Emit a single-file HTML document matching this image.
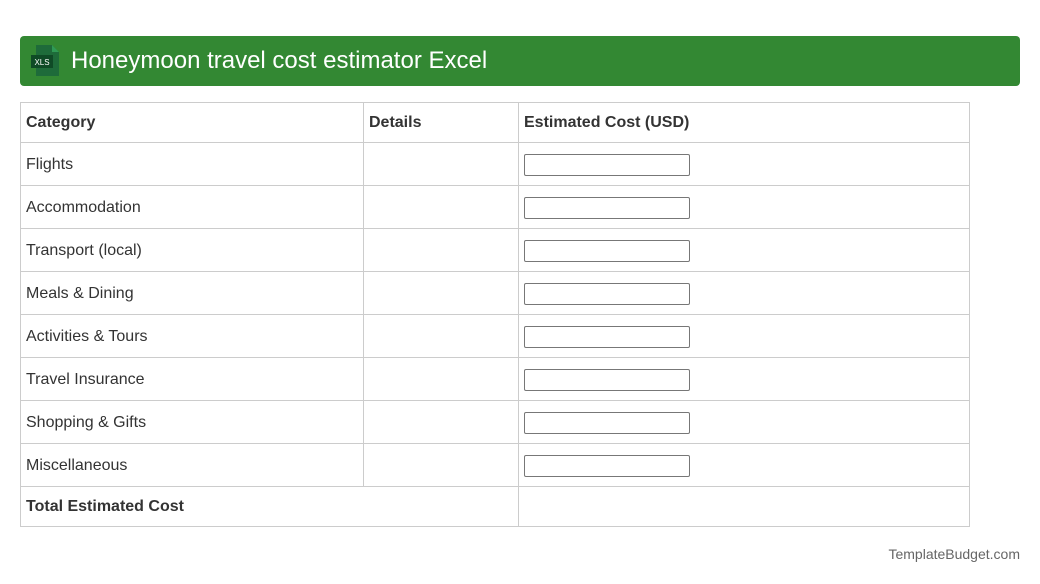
<!DOCTYPE html>
<html><head><style>
body{margin:0;background:#fff;font-family:"Liberation Sans",Arial,sans-serif;color:#333;}
.hdr{position:absolute;left:20px;top:36px;width:1000px;height:50px;background:#338833;border-radius:4px;}
.hdr .t{position:absolute;left:51px;top:11px;font-size:24px;color:#fff;}
table{position:absolute;left:20px;top:102px;width:950px;border-collapse:collapse;font-size:16px;}
td{border:1px solid #ccc;padding:1px 5px 0;height:41px;}
tr.h td{height:38px;font-weight:bold;}
tr.f td{height:38px;font-weight:bold;}
.in{width:164px;height:20px;border:1px solid #777;border-radius:2px;}
.ft{position:absolute;right:20px;top:546px;font-size:14px;color:#666;}
</style></head><body>
<div class="hdr">
<svg style="position:absolute;left:11px;top:9px" width="28" height="32" viewBox="0 0 28 32">
<path d="M5 0H21L28 7V31H5Z" fill="#1e6b3a"/><path d="M21 0V7H28Z" fill="#2f9a55"/>
<rect x="0" y="10" width="22" height="13" fill="#0f4a26"/>
<text x="11" y="20" font-size="8" fill="#fff" text-anchor="middle" font-family="Liberation Sans">XLS</text>
</svg>
<div class="t">Honeymoon travel cost estimator Excel</div>
</div>
<table>
<colgroup><col style="width:343px"><col style="width:155px"><col></colgroup>
<tr class="h"><td>Category</td><td>Details</td><td>Estimated Cost (USD)</td></tr>
<tr><td>Flights</td><td></td><td><div class="in"></div></td></tr>
<tr><td>Accommodation</td><td></td><td><div class="in"></div></td></tr>
<tr><td>Transport (local)</td><td></td><td><div class="in"></div></td></tr>
<tr><td>Meals &amp; Dining</td><td></td><td><div class="in"></div></td></tr>
<tr><td>Activities &amp; Tours</td><td></td><td><div class="in"></div></td></tr>
<tr><td>Travel Insurance</td><td></td><td><div class="in"></div></td></tr>
<tr><td>Shopping &amp; Gifts</td><td></td><td><div class="in"></div></td></tr>
<tr><td>Miscellaneous</td><td></td><td><div class="in"></div></td></tr>
<tr class="f"><td colspan="2">Total Estimated Cost</td><td></td></tr>
</table>
<div class="ft">TemplateBudget.com</div>
</body></html>
